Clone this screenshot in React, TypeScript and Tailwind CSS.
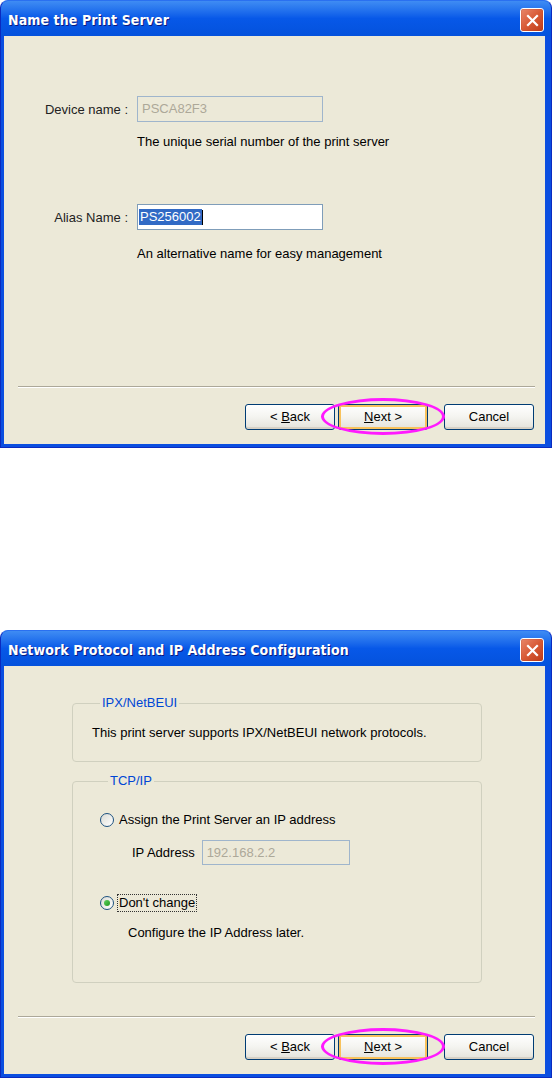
import React from 'react';

const font = { fontFamily: '"Liberation Sans", Arial, sans-serif' };

function CloseButton() {
  return (
    <div className="w-[24px] h-[24px] rounded-[3px] border border-white bg-linear-to-br from-[#e8876a] via-[#d85a35] to-[#bf3b17] flex items-center justify-center shadow-[inset_0_0_1px_#8a2000]">
      <svg width="13" height="13" viewBox="0 0 13 13">
        <path d="M2 2 L11 11 M11 2 L2 11" stroke="white" strokeWidth="2.2" strokeLinecap="square" />
      </svg>
    </div>
  );
}

function XpButton({ children, isDefault = false }: { children: React.ReactNode; isDefault?: boolean }) {
  return (
    <div
      className={`w-[90px] h-[26px] rounded-[3px] border border-[#003c74] bg-linear-to-b from-white via-[#f4f4f0] to-[#e3e2da] flex items-center justify-center text-[13px] text-black ${
        isDefault ? 'shadow-[inset_0_0_0_2px_#f8c25c]' : 'shadow-[inset_0_-2px_0_#d6d0c5]'
      }`}
    >
      {children}
    </div>
  );
}

function Footer() {
  return (
    <div className="mt-auto">
      <div className="ml-[14px] mr-[10px] h-[2px] border-t border-[#aca899] border-b border-b-white" />
      <div className="flex justify-end items-center pr-[11px] pt-[16px] pb-[14px]">
        <XpButton>
          &lt;&nbsp;<span className="underline">B</span>ack
        </XpButton>
        <div className="relative ml-[3px]">
          <XpButton isDefault>
            <span className="underline">N</span>ext&nbsp;&gt;
          </XpButton>
          {/* highlight ring drawn on the screenshot */}
          <div className="absolute left-[-17px] top-[-6px] w-[124px] h-[37px] rounded-[50%] border-[3px] border-[#ff1aff] pointer-events-none" />
        </div>
        <div className="ml-[16px]">
          <XpButton>Cancel</XpButton>
        </div>
      </div>
    </div>
  );
}

function XpWindow({ title, children }: { title: string; children: React.ReactNode }) {
  return (
    <div className="w-[552px] h-[448px] flex flex-col rounded-t-[8px] bg-[#0a4ee0] border border-[#0a2ac0] border-t-[#2a70f0]">
      <div className="h-[35px] shrink-0 flex items-center justify-between pl-[7px] pr-[7px] pt-[3px] rounded-t-[7px] bg-linear-to-b from-[#3f8cf3] via-[#0758e8] to-[#0452dc]">
        <span
          className="text-white font-bold text-[14px] tracking-[0.1px] [text-shadow:1px_1px_0_#0a1a80]"
          style={{ fontFamily: '"DejaVu Sans Condensed", "Liberation Sans", sans-serif' }}
        >
          {title}
        </span>
        <CloseButton />
      </div>
      <div className="flex-1 flex flex-col mx-[3px] mb-[3px] mr-[6px] bg-[#ece9d8] text-[13px] leading-[16px] text-black">
        {children}
      </div>
    </div>
  );
}

function Radio({ checked = false }: { checked?: boolean }) {
  return (
    <div className="w-[14px] h-[14px] rounded-full border border-[#1c5180] bg-linear-to-br from-[#dcdcd4] to-white flex items-center justify-center shrink-0">
      {checked && <div className="w-[6px] h-[6px] rounded-full bg-linear-to-br from-[#5fd05f] to-[#1a9a1a]" />}
    </div>
  );
}

export default function App() {
  return (
    <div className="w-[552px] h-[1078px] bg-white flex flex-col" style={font}>
      <XpWindow title="Name the Print Server">
        <div className="pt-[60px]">
          <div className="flex items-center">
            <div className="w-[124px] text-right text-[#222] pt-[2px]">Device name :</div>
            <div className="ml-[9px] w-[186px] h-[26px] border border-[#9fb5cc] bg-[#ece9d8] pl-[4px] flex items-center text-[#aca899]">
              PSCA82F3
            </div>
          </div>
          <div className="ml-[133px] mt-[12px]">The unique serial number of the print server</div>
          <div className="flex items-center mt-[54px]">
            <div className="w-[124px] text-right text-[#222] pt-[2px]">Alias Name :</div>
            <div className="ml-[9px] w-[186px] h-[26px] border border-[#7f9db9] bg-white pl-[1px] flex items-center">
              <span className="bg-[#316ac5] text-white px-[1px] leading-[16px]">PS256002</span>
              <span className="w-[1px] h-[15px] bg-black" />
            </div>
          </div>
          <div className="ml-[133px] mt-[16px]">An alternative name for easy management</div>
        </div>
        <Footer />
      </XpWindow>

      <div className="h-[182px] shrink-0" />

      <XpWindow title="Network Protocol and IP Address Configuration">
        <div className="pt-[29px] pl-[68px]">
          <fieldset className="w-[410px] h-[67px] border border-[#d0d0bf] rounded-[4px] px-[19px] pt-[14px]">
            <legend className="ml-[8px] px-[2px] text-[#0046d5]">IPX/NetBEUI</legend>
            <div>This print server supports IPX/NetBEUI network protocols.</div>
          </fieldset>
          <fieldset className="w-[410px] h-[210px] mt-[11px] border border-[#d0d0bf] rounded-[4px] pl-[27px] pt-[23px]">
            <legend className="ml-[8px] px-[2px] text-[#0046d5]">TCP/IP</legend>
            <div className="flex items-center gap-[5px]">
              <Radio />
              <span>Assign the Print Server an IP address</span>
            </div>
            <div className="flex items-center mt-[12px] ml-[32px]">
              <span>IP Address</span>
              <div className="ml-[7px] w-[148px] h-[25px] border border-[#9fb5cc] bg-[#ece9d8] pl-[4px] flex items-center text-[#aca899]">
                192.168.2.2
              </div>
            </div>
            <div className="flex items-center gap-[4px] mt-[30px]">
              <Radio checked />
              <span className="outline-1 outline-dotted outline-[#333] px-[1px]">Don&apos;t change</span>
            </div>
            <div className="ml-[28px] mt-[14px]">Configure the IP Address later.</div>
          </fieldset>
        </div>
        <Footer />
      </XpWindow>
    </div>
  );
}
